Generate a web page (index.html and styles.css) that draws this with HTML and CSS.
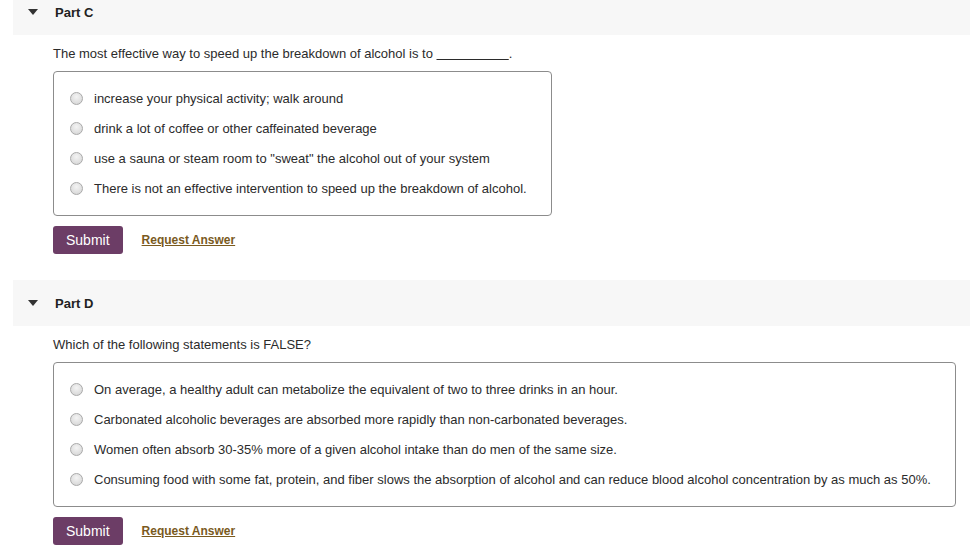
FILE: index.html
```html
<!DOCTYPE html>
<html lang="en">
  <head>
    <meta charset="UTF-8" />
    <title>Parts C and D</title>
    <link rel="stylesheet" href="styles.css">
  </head>
  <body>
    <section class="part first">
      <div class="part-head">
        <span class="caret"></span>
        <span class="part-title">Part C</span>
      </div>
      <div class="part-body">
        <p class="question">The most effective way to speed up the breakdown of alcohol is to <u>&nbsp;&nbsp;&nbsp;&nbsp;&nbsp;&nbsp;&nbsp;&nbsp;&nbsp;&nbsp;&nbsp;&nbsp;&nbsp;&nbsp;&nbsp;&nbsp;&nbsp;&nbsp;&nbsp;&nbsp;</u>.</p>
        <div class="choices">
          <label class="choice"><span class="radio"></span>increase your physical activity; walk around</label>
          <label class="choice"><span class="radio"></span>drink a lot of coffee or other caffeinated beverage</label>
          <label class="choice"><span class="radio"></span>use a sauna or steam room to "sweat" the alcohol out of your system</label>
          <label class="choice"><span class="radio"></span>There is not an effective intervention to speed up the breakdown of alcohol.</label>
        </div>
        <div class="actions">
          <button class="btn">Submit</button>
          <a href="#" class="request">Request Answer</a>
        </div>
      </div>
    </section>

    <section class="part">
      <div class="part-head">
        <span class="caret"></span>
        <span class="part-title">Part D</span>
      </div>
      <div class="part-body">
        <p class="question">Which of the following statements is FALSE?</p>
        <div class="choices">
          <label class="choice"><span class="radio"></span>On average, a healthy adult can metabolize the equivalent of two to three drinks in an hour.</label>
          <label class="choice"><span class="radio"></span>Carbonated alcoholic beverages are absorbed more rapidly than non-carbonated beverages.</label>
          <label class="choice"><span class="radio"></span>Women often absorb 30-35% more of a given alcohol intake than do men of the same size.</label>
          <label class="choice"><span class="radio"></span>Consuming food with some fat, protein, and fiber slows the absorption of alcohol and can reduce blood alcohol concentration by as much as 50%.</label>
        </div>
        <div class="actions">
          <button class="btn">Submit</button>
          <a href="#" class="request">Request Answer</a>
        </div>
      </div>
    </section>
  </body>
</html>
```

FILE: styles.css
```css
:root {
  --text: #2b2b2b;
  --head-bg: #f7f7f7;
  --purple: #6c3d66;
  --gold: #7a5a1e;
  --font: "Liberation Sans", Arial, Helvetica, sans-serif;
}

* {
  box-sizing: border-box;
}

html,
body {
  margin: 0;
  font-family: var(--font);
  color: var(--text);
  background: #fff;
}

.part {
  padding-bottom: 26px;
}

/* the top of Part C is scrolled off in the screenshot */
.part.first .part-head {
  margin-top: -11px;
}

.part-head {
  display: flex;
  align-items: center;
  height: 46px;
  margin-left: 13px;
  background: var(--head-bg);
}

.caret {
  width: 0;
  height: 0;
  margin-left: 15px;
  border-left: 5px solid transparent;
  border-right: 5px solid transparent;
  border-top: 6px solid #333;
}

.part-title {
  margin-left: 17px;
  font-size: 13px;
  font-weight: 700;
  color: #222;
}

.part-body {
  padding: 0 0 0 53px;
}

.question {
  margin: 11px 0 0;
  font-size: 13px;
  line-height: 15px;
}

.choices {
  display: inline-flex;
  flex-direction: column;
  margin-top: 10px;
  padding: 11px 24px 12px 16px;
  border: 1px solid #8c8c8c;
  border-radius: 4px;
}

.choice {
  display: flex;
  align-items: center;
  height: 30px;
  font-size: 13px;
  white-space: nowrap;
}

.radio {
  width: 13px;
  height: 13px;
  margin-right: 11px;
  border: 1px solid #a9a9a9;
  border-radius: 50%;
  background: radial-gradient(circle at 50% 35%, #f4f4f4 0%, #dcdcdc 70%, #cfcfcf 100%);
}

.actions {
  display: flex;
  align-items: center;
  margin-top: 10px;
}

.btn {
  height: 28px;
  padding: 0 13px;
  border: none;
  border-radius: 3px;
  background: var(--purple);
  color: #fff;
  font-family: var(--font);
  font-size: 14px;
  cursor: pointer;
}

.request {
  margin-left: 19px;
  font-size: 12px;
  font-weight: 700;
  color: var(--gold);
}
```
